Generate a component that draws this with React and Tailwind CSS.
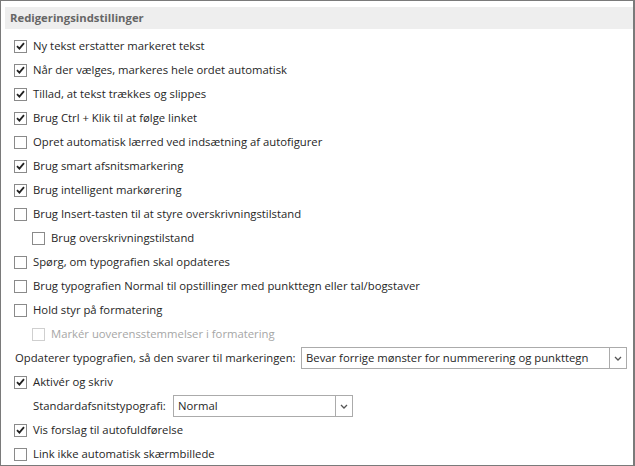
import React from 'react';

const rows = [
  { label: 'Ny tekst erstatter markeret tekst', checked: true },
  { label: 'Når der vælges, markeres hele ordet automatisk', checked: true },
  { label: 'Tillad, at tekst trækkes og slippes', checked: true },
  { label: 'Brug Ctrl + Klik til at følge linket', checked: true },
  { label: 'Opret automatisk lærred ved indsætning af autofigurer', checked: false },
  { label: 'Brug smart afsnitsmarkering', checked: true },
  { label: 'Brug intelligent markørering', checked: true },
  { label: 'Brug Insert-tasten til at styre overskrivningstilstand', checked: false },
  { label: 'Brug overskrivningstilstand', checked: false, indent: true },
  { label: 'Spørg, om typografien skal opdateres', checked: false },
  { label: 'Brug typografien Normal til opstillinger med punkttegn eller tal/bogstaver', checked: false },
  { label: 'Hold styr på formatering', checked: false },
  { label: 'Markér uoverensstemmelser i formatering', checked: false, indent: true, disabled: true },
];

function Check({ checked, disabled }) {
  return (
    <span
      className={
        'w-[13px] h-[13px] border flex items-center justify-center shrink-0 bg-white ' +
        (disabled ? 'border-[#cfcfcf]' : 'border-[#8a8a8a]')
      }
    >
      {checked && (
        <svg width="9" height="8" viewBox="0 0 9 8">
          <path d="M1 4.2 L3.4 6.6 L8 1.2" fill="none" stroke="#222" strokeWidth="1.8" />
        </svg>
      )}
    </span>
  );
}

function Row({ label, checked, indent, disabled }) {
  return (
    <div className={'h-[24px] flex items-center gap-[6px] whitespace-nowrap ' + (indent ? 'pl-[27px]' : 'pl-[9px]')}>
      <Check checked={checked} disabled={disabled} />
      <span className={disabled ? 'text-[#a6a6a6]' : 'text-[#262626]'}>{label}</span>
    </div>
  );
}

function Select({ value, width }) {
  return (
    <div className={'h-[22px] border border-[#ababab] bg-white flex items-center shrink-0 ' + width}>
      <span className="flex-1 pl-[4px] text-[#262626] whitespace-nowrap overflow-hidden">{value}</span>
      <span className="w-[17px] h-[20px] border-l border-[#ababab] flex items-center justify-center">
        <svg width="8" height="5" viewBox="0 0 8 5">
          <path d="M1 1 L4 4 L7 1" fill="none" stroke="#555" strokeWidth="1.3" />
        </svg>
      </span>
    </div>
  );
}

export default function App() {
  return (
    <div
      className="w-[635px] h-[466px] border border-[#7a7a7a] border-r-2 bg-white text-[11.3px] overflow-hidden"
      style={{ fontFamily: '"Open Sans", "Noto Sans", sans-serif' }}
    >
      <div className="pt-[6px] pl-[4px]">
        <div className="h-[22px] bg-[#eeeeee] flex items-center pl-[5px] font-bold text-[#666666]">
          Redigeringsindstillinger
        </div>
        <div className="mt-[5px]">
          {rows.map((r) => (
            <Row key={r.label} {...r} />
          ))}
          <div className="h-[24px] flex items-center pl-[10px] gap-[5px] whitespace-nowrap">
            <span className="text-[#262626] w-[281px]">Opdaterer typografien, så den svarer til markeringen:</span>
            <Select value="Bevar forrige mønster for nummerering og punkttegn" width="w-[326px]" />
          </div>
          <Row label="Aktivér og skriv" checked />
          <div className="h-[24px] flex items-center pl-[28px] gap-[5px] whitespace-nowrap">
            <span className="text-[#262626] w-[135px]">Standardafsnitstypografi:</span>
            <Select value="Normal" width="w-[180px]" />
          </div>
          <Row label="Vis forslag til autofuldførelse" checked />
          <Row label="Link ikke automatisk skærmbillede" checked={false} />
        </div>
      </div>
    </div>
  );
}
